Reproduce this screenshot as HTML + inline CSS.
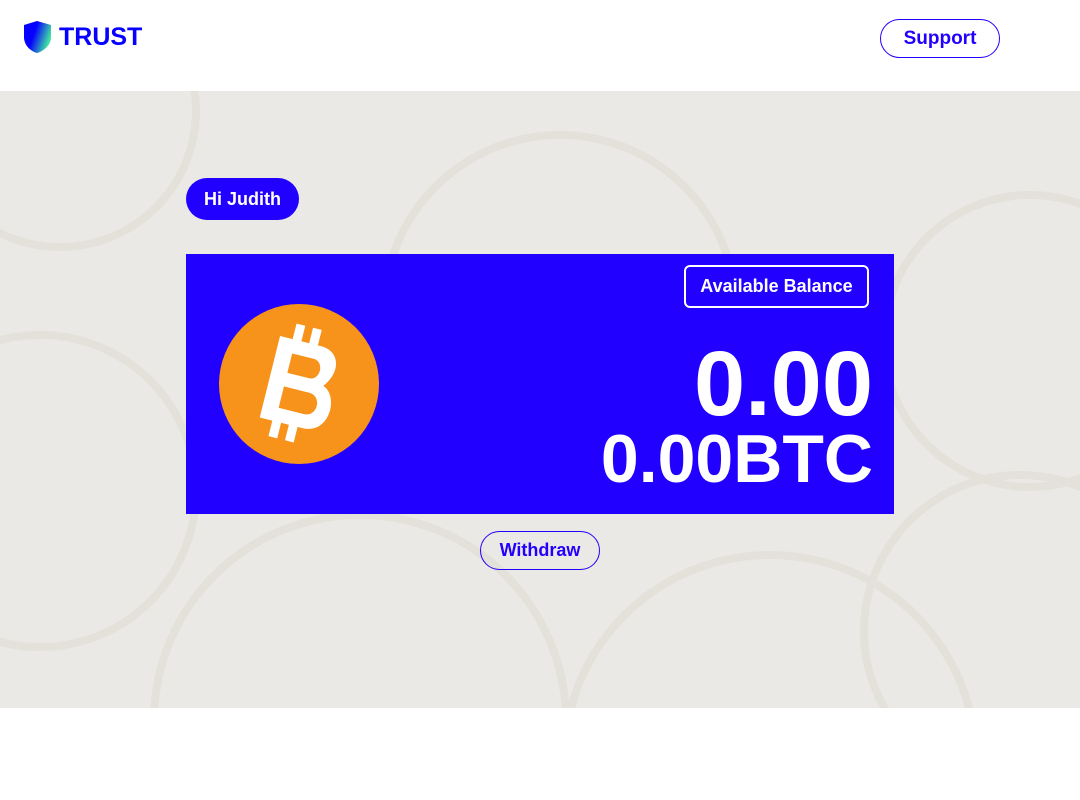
<!DOCTYPE html>
<html><head><meta charset="utf-8"><style>
*{margin:0;padding:0;box-sizing:border-box}
html,body{width:1080px;height:800px;overflow:hidden}
body{background:#fff;font-family:"Liberation Sans",sans-serif;position:relative}
.hero{position:absolute;left:0;top:91px;width:1080px;height:617px;background:#ebe9e5;overflow:hidden}
.c{position:absolute;border-radius:50%;border:8px solid #e4e1db;}
.btn{position:absolute;border-radius:20px;font-weight:bold;display:flex;align-items:center;justify-content:center}
.card{position:absolute;left:186px;top:254px;width:708px;height:260px;background:#2200ff;overflow:hidden}
</style></head><body>
<svg style="position:absolute;left:22px;top:20px" width="32" height="34" viewBox="0 0 32 34">
<defs><linearGradient id="g" x1="0" y1="0" x2="1" y2="0.4"><stop offset="0.45" stop-color="#0500ff"/><stop offset="1" stop-color="#3fe0a0"/></linearGradient></defs>
<path d="M2 5 L15 1 L29 5 V17 C29 25 22 31 15 33 C8 31 2 25 2 17 Z" fill="url(#g)"/></svg>
<div style="position:absolute;left:59px;top:23px;font-size:25px;font-weight:900;color:#0500ff;transform:scaleX(1.0);transform-origin:left;line-height:28px">TRUST</div>
<div class="btn" style="left:880px;top:19px;width:120px;height:39px;border:1px solid #2200ff;color:#2200ff;font-size:19px">Support</div>
<div class="hero">
<div class="c" style="left:-120px;top:240px;width:320px;height:320px"></div>
<div class="c" style="left:150px;top:420px;width:420px;height:420px"></div>
<div class="c" style="left:560px;top:460px;width:420px;height:420px"></div>
<div class="c" style="left:380px;top:40px;width:360px;height:360px"></div>
<div class="c" style="left:880px;top:100px;width:300px;height:300px"></div>
<div class="c" style="left:-80px;top:-120px;width:280px;height:280px"></div>
<div class="c" style="left:860px;top:380px;width:320px;height:320px"></div>
</div>
<div class="btn" style="left:186px;top:178px;width:113px;height:42px;background:#2200ff;color:#fff;font-size:18px;border-radius:21px">Hi Judith</div>
<div class="card">
<div class="btn" style="left:498px;top:11px;width:185px;height:43px;border:2px solid #fff;border-radius:6px;color:#fff;font-size:18px">Available Balance</div>
<svg style="position:absolute;left:33px;top:50px" width="160" height="160" viewBox="0 0 160 160">
<circle cx="80" cy="80" r="80" fill="#f7931a"/>
<g transform="rotate(14 80 80)" fill="#fff">
<rect x="63" y="22" width="9" height="20"/><rect x="80" y="22" width="9" height="20"/>
<rect x="63" y="118" width="9" height="20"/><rect x="80" y="118" width="9" height="20"/>
<path fill-rule="evenodd" d="M50 38 H92 C112 38 118 58 104 76 C122 82 122 122 94 122 H50 Z M66 52 V72 H88 C100 72 100 52 88 52 Z M66 86 V108 H92 C106 108 106 86 92 86 Z"/>
</g></svg>
<div style="position:absolute;right:21px;top:80px;color:#fff;font-size:92px;font-weight:bold;line-height:100px">0.00</div>
<div style="position:absolute;right:21px;top:167px;color:#fff;font-size:68px;font-weight:bold;line-height:76px">0.00BTC</div>
</div>
<div class="btn" style="left:480px;top:531px;width:120px;height:39px;border:1px solid #2200ff;color:#2200ff;font-size:18px">Withdraw</div>
</body></html>
